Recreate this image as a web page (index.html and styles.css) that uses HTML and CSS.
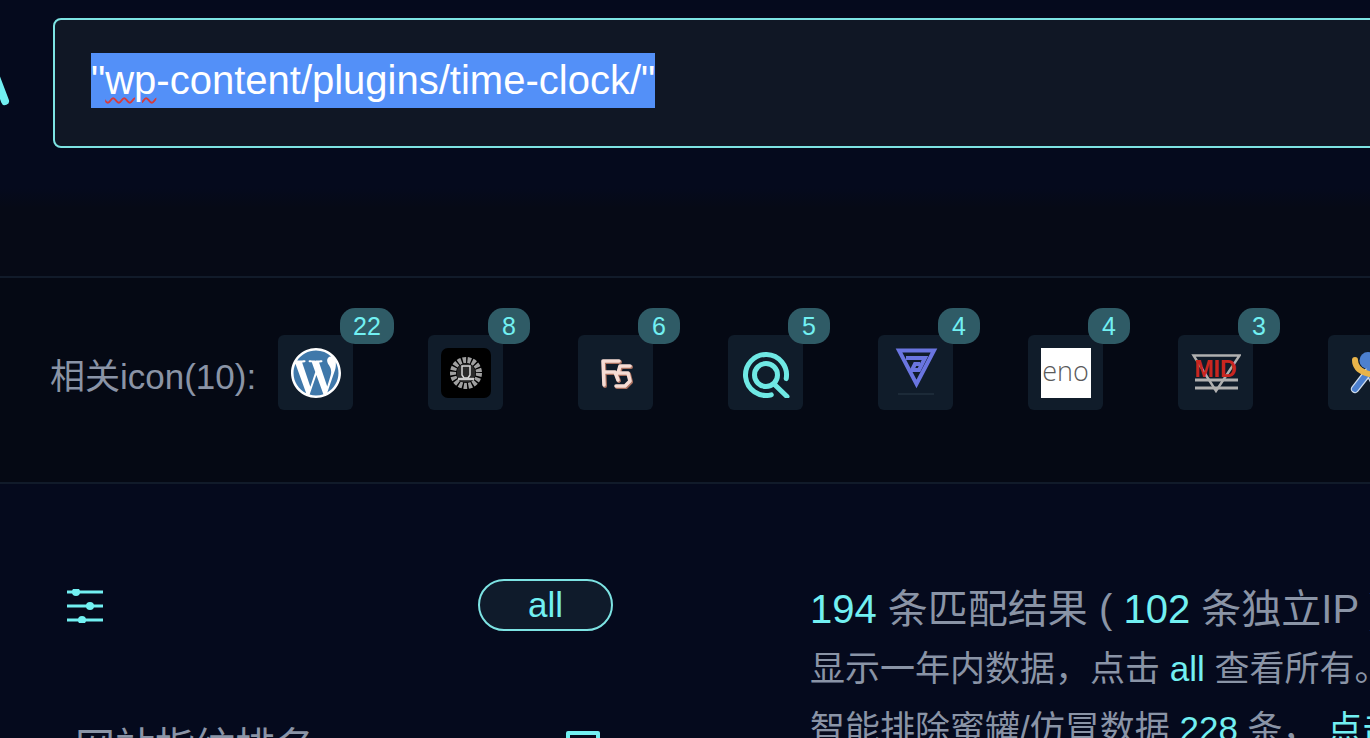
FILE: index.html
```html
<!DOCTYPE html>
<html lang="zh">
<head>
<meta charset="utf-8">
<title>"wp-content/plugins/time-clock/"</title>
<link rel="stylesheet" href="styles.css">
</head>
<body>
<header class="search-row">
  <svg class="logo" viewBox="0 0 53 130" aria-hidden="true"><path d="M-6 54 L5 83" /></svg>
  <div class="search-box"><span class="query">"<span class="typo">wp</span>-content/plugins/time-clock/"</span></div>
</header>
<div class="band"></div>
<section class="icons-row">
  <span class="icons-label">相关icon(10):</span>
  <div class="icons">
    <div class="tile">
      <svg class="ico-wp" viewBox="0 0 24 24"><circle cx="12" cy="12" r="11.5" fill="#3f78aa"/><path fill="#fff" d="M21.469 6.825c.84 1.537 1.318 3.3 1.318 5.175 0 3.979-2.156 7.456-5.363 9.325l3.295-9.527c.615-1.54.82-2.771.82-3.864 0-.405-.026-.78-.07-1.11m-7.981.105c.647-.03 1.232-.105 1.232-.105.582-.075.514-.93-.067-.899 0 0-1.755.135-2.88.135-1.064 0-2.85-.15-2.85-.15-.585-.03-.661.855-.075.885 0 0 .54.061 1.125.09l1.68 4.605-2.37 7.08L5.354 6.9c.649-.03 1.234-.1 1.234-.1.585-.075.516-.93-.065-.896 0 0-1.746.138-2.874.138-.2 0-.438-.008-.69-.015C4.911 3.15 8.235 1.215 12 1.215c2.809 0 5.365 1.072 7.286 2.833-.046-.003-.091-.009-.141-.009-1.06 0-1.812.923-1.812 1.914 0 .89.513 1.643 1.06 2.531.411.72.89 1.643.89 2.977 0 .915-.354 1.994-.821 3.479l-1.075 3.585-3.9-11.61.001.014zM12 22.784c-1.059 0-2.081-.153-3.048-.437l3.237-9.406 3.315 9.087c.024.053.05.101.078.149-1.12.393-2.325.609-3.582.609M1.211 12c0-1.564.336-3.05.935-4.39L7.29 21.709C3.694 19.96 1.212 16.271 1.211 12M12 0C5.385 0 0 5.385 0 12s5.385 12 12 12 12-5.385 12-12S18.615 0 12 0"/></svg>
      <span class="badge badge-wide">22</span>
    </div>
    <div class="tile">
      <svg class="ico" viewBox="0 0 50 50"><rect width="50" height="50" rx="7" fill="#000"/><circle cx="25" cy="25" r="13" fill="none" stroke="#a0a0a0" stroke-width="6" stroke-dasharray="3.4 1.4"/><circle cx="25" cy="25" r="9.5" fill="#2a2a2a"/><path d="M21 18h8v9l-2 3h-4l-2-3z" fill="none" stroke="#d8d8d8" stroke-width="1.5"/><path d="M17 31h16" stroke="#ccc" stroke-width="2.4"/></svg>
      <span class="badge">8</span>
    </div>
    <div class="tile">
      <svg class="ico" viewBox="0 0 50 50"><g fill="none" stroke="#a9705f" stroke-width="4" stroke-linejoin="round" stroke-linecap="round" transform="translate(1 1)"><path d="M13 37 L12 13 H28 M13 24 H24 L27 32"/><path d="M39 18 H29 L27 25 H37 L39 33 L34 38 H25"/></g><g fill="none" stroke="#f6dcd4" stroke-width="3.6" stroke-linejoin="round" stroke-linecap="round"><path d="M13 37 L12 13 H28 M13 24 H24 L27 32"/><path d="M39 18 H29 L27 25 H37 L39 33 L34 38 H25"/></g></svg>
      <span class="badge">6</span>
    </div>
    <div class="tile">
      <svg class="ico" viewBox="0 0 50 50"><g fill="none" stroke="#6fe8e4" stroke-width="5" stroke-linecap="round"><path d="M45.2 30.6 A20.5 20.5 0 1 0 30.3 46.8"/><circle cx="25" cy="27" r="11.5"/><path d="M33 36 L46 48.5"/></g></svg>
      <span class="badge">5</span>
    </div>
    <div class="tile">
      <svg class="ico" viewBox="0 0 50 50"><g fill="none" stroke="#6a75e0" stroke-width="4"><path d="M8 2.5 H43 L25.5 36 Z" stroke-linejoin="miter"/><path d="M15 10 H34 L28 22 H21 L24 16 H29"/></g><path d="M7 46 H43" stroke="#1c2a38" stroke-width="2"/></svg>
      <span class="badge">4</span>
    </div>
    <div class="tile">
      <div class="eno">eno</div>
      <span class="badge">4</span>
    </div>
    <div class="tile">
      <div class="mid">
        <svg class="mid-lines" viewBox="0 0 50 50"><g fill="none" stroke="#b0b0b0" stroke-width="3"><path d="M2.5 7.5 H48.5 L25 43 Z" stroke-width="2.4"/><path d="M4 32 H47 M4 40 H47"/></g></svg>
        <span class="mid-text">MID</span>
      </div>
      <span class="badge">3</span>
    </div>
    <div class="tile">
      <svg class="ico" viewBox="0 0 50 50"><g fill="none" stroke-linecap="round"><path d="M14 41 L28 23 L38 43" stroke="#cfdcec" stroke-width="8.5"/><path d="M14 41 L28 23 L38 43" stroke="#4c80cf" stroke-width="6"/><path d="M14 12 C14 24 30 30 52 26" stroke="#e8b44a" stroke-width="6"/></g><circle cx="27" cy="12.5" r="8.5" fill="#4c80cf"/></svg>
    </div>
  </div>
</section>
<main class="main">
  <aside class="side">
    <div class="side-top">
      <svg class="sliders" viewBox="0 0 36 34"><g stroke="#72f0f2" stroke-width="3"><path d="M0 3h36M0 17h36M0 31h36"/></g><g fill="#72f0f2"><circle cx="9" cy="3" r="4"/><circle cx="23" cy="17" r="4"/><circle cx="15" cy="31" r="4"/></g></svg>
      <span class="pill">all</span>
    </div>
    <div class="side-title">
      <span>网站指纹排名</span>
      <svg class="filter" viewBox="0 0 34 34"><path d="M2 2H32V9L21 19V32H13V19L2 9Z" fill="none" stroke="#72f0f2" stroke-width="4" stroke-linejoin="round"/></svg>
    </div>
  </aside>
  <div class="results">
    <p class="line-1"><b>194</b> 条匹配结果 ( <b>102</b> 条独立IP )</p>
    <p class="line-2">显示一年内数据，点击 <b>all</b> 查看所有。</p>
    <p class="line-3">智能排除蜜罐/仿冒数据 <b>228</b> 条，&nbsp;<b>点击查看</b></p>
  </div>
</main>
</body>
</html>
```
FILE: styles.css
```css
* { box-sizing: border-box; }
html, body { margin: 0; height: 738px; overflow: hidden; }
body {
  background: #050a1d;
  font-family: "Liberation Sans", "Noto Sans CJK SC", sans-serif;
  color: #8a94a6;
}
.search-row { display: flex; padding-top: 18px; height: 148px; }
.logo { flex: none; width: 53px; height: 130px; }
.logo path { stroke: #72f0f2; stroke-width: 8px; stroke-linecap: round; fill: none; }
.search-box {
  flex: none;
  width: 1400px;
  height: 130px;
  background: #101725;
  border: 2px solid #7de3e3;
  border-radius: 8px;
  padding: 33px 0 0 36px;
  font-size: 40px;
  color: #fff;
}
.query { display: inline-block; background: #5390f8; line-height: 55px; height: 55px; white-space: nowrap; }
.typo { text-decoration: underline wavy #d83a3a 2px; text-underline-offset: 3px; }
.band { height: 128px; background: linear-gradient(#050a1d 40px, #060a16 60px); }
.icons-row {
  display: flex;
  align-items: flex-start;
  height: 208px;
  background: #050914;
  border-top: 2px solid #111b2a;
  border-bottom: 2px solid #111b2a;
  padding: 57px 0 0 50px;
}
.icons-label { flex: none; width: 228px; font-size: 35px; line-height: 84px; white-space: nowrap; }
.icons { display: flex; gap: 75px; }
.tile {
  position: relative;
  flex: none;
  width: 75px;
  height: 75px;
  background: #101c2a;
  border-radius: 6px;
  display: flex;
  align-items: center;
  justify-content: center;
}
.ico { width: 50px; height: 50px; }
.ico-wp { width: 50px; height: 50px; }
.badge {
  position: absolute;
  top: -27px;
  left: 60px;
  min-width: 42px;
  height: 36px;
  padding: 0 13px;
  border-radius: 15px;
  background: #2f5b66;
  color: #72f0f2;
  font-size: 25px;
  line-height: 36px;
  text-align: center;
}
.badge-wide { left: 62px; }
.eno {
  width: 50px;
  height: 50px;
  background: #fff;
  color: #5a5a5a;
  font-family: "Open Sans", sans-serif;
  font-weight: 300;
  font-size: 27px;
  line-height: 46px;
  text-align: center;
}
.mid { position: relative; width: 50px; height: 50px; }
.mid-lines { width: 50px; height: 50px; display: block; }
.mid-text {
  position: absolute;
  left: 0;
  right: 0;
  top: 8px;
  text-align: center;
  color: #c9261f;
  font-weight: bold;
  font-size: 23px;
  line-height: 26px;
}
.main { display: flex; padding: 95px 0 0 67px; }
.side { flex: none; width: 546px; margin-right: 197px; }
.side-top { display: flex; justify-content: space-between; align-items: flex-start; }
.sliders { width: 36px; height: 34px; margin-top: 10px; }
.pill {
  width: 135px;
  height: 52px;
  border: 2px solid #7de3e3;
  border-radius: 26px;
  background: #0f1b2b;
  color: #72f0f2;
  font-size: 35px;
  line-height: 48px;
  text-align: center;
}
.side-title {
  display: flex;
  justify-content: space-between;
  align-items: flex-start;
  width: 525px;
  margin-top: 92px;
  margin-left: 8px;
  font-size: 40px;
  line-height: 48px;
  white-space: nowrap;
}
.filter { width: 34px; height: 34px; margin-top: 8px; }
.results { flex: none; white-space: nowrap; }
.results p { margin: 0; }
.results b { font-weight: normal; color: #72f0f2; }
.line-1 { font-size: 40px; line-height: 60px; margin-top: 8px; }
.line-2, .line-3 { font-size: 35px; line-height: 60px; }
```
